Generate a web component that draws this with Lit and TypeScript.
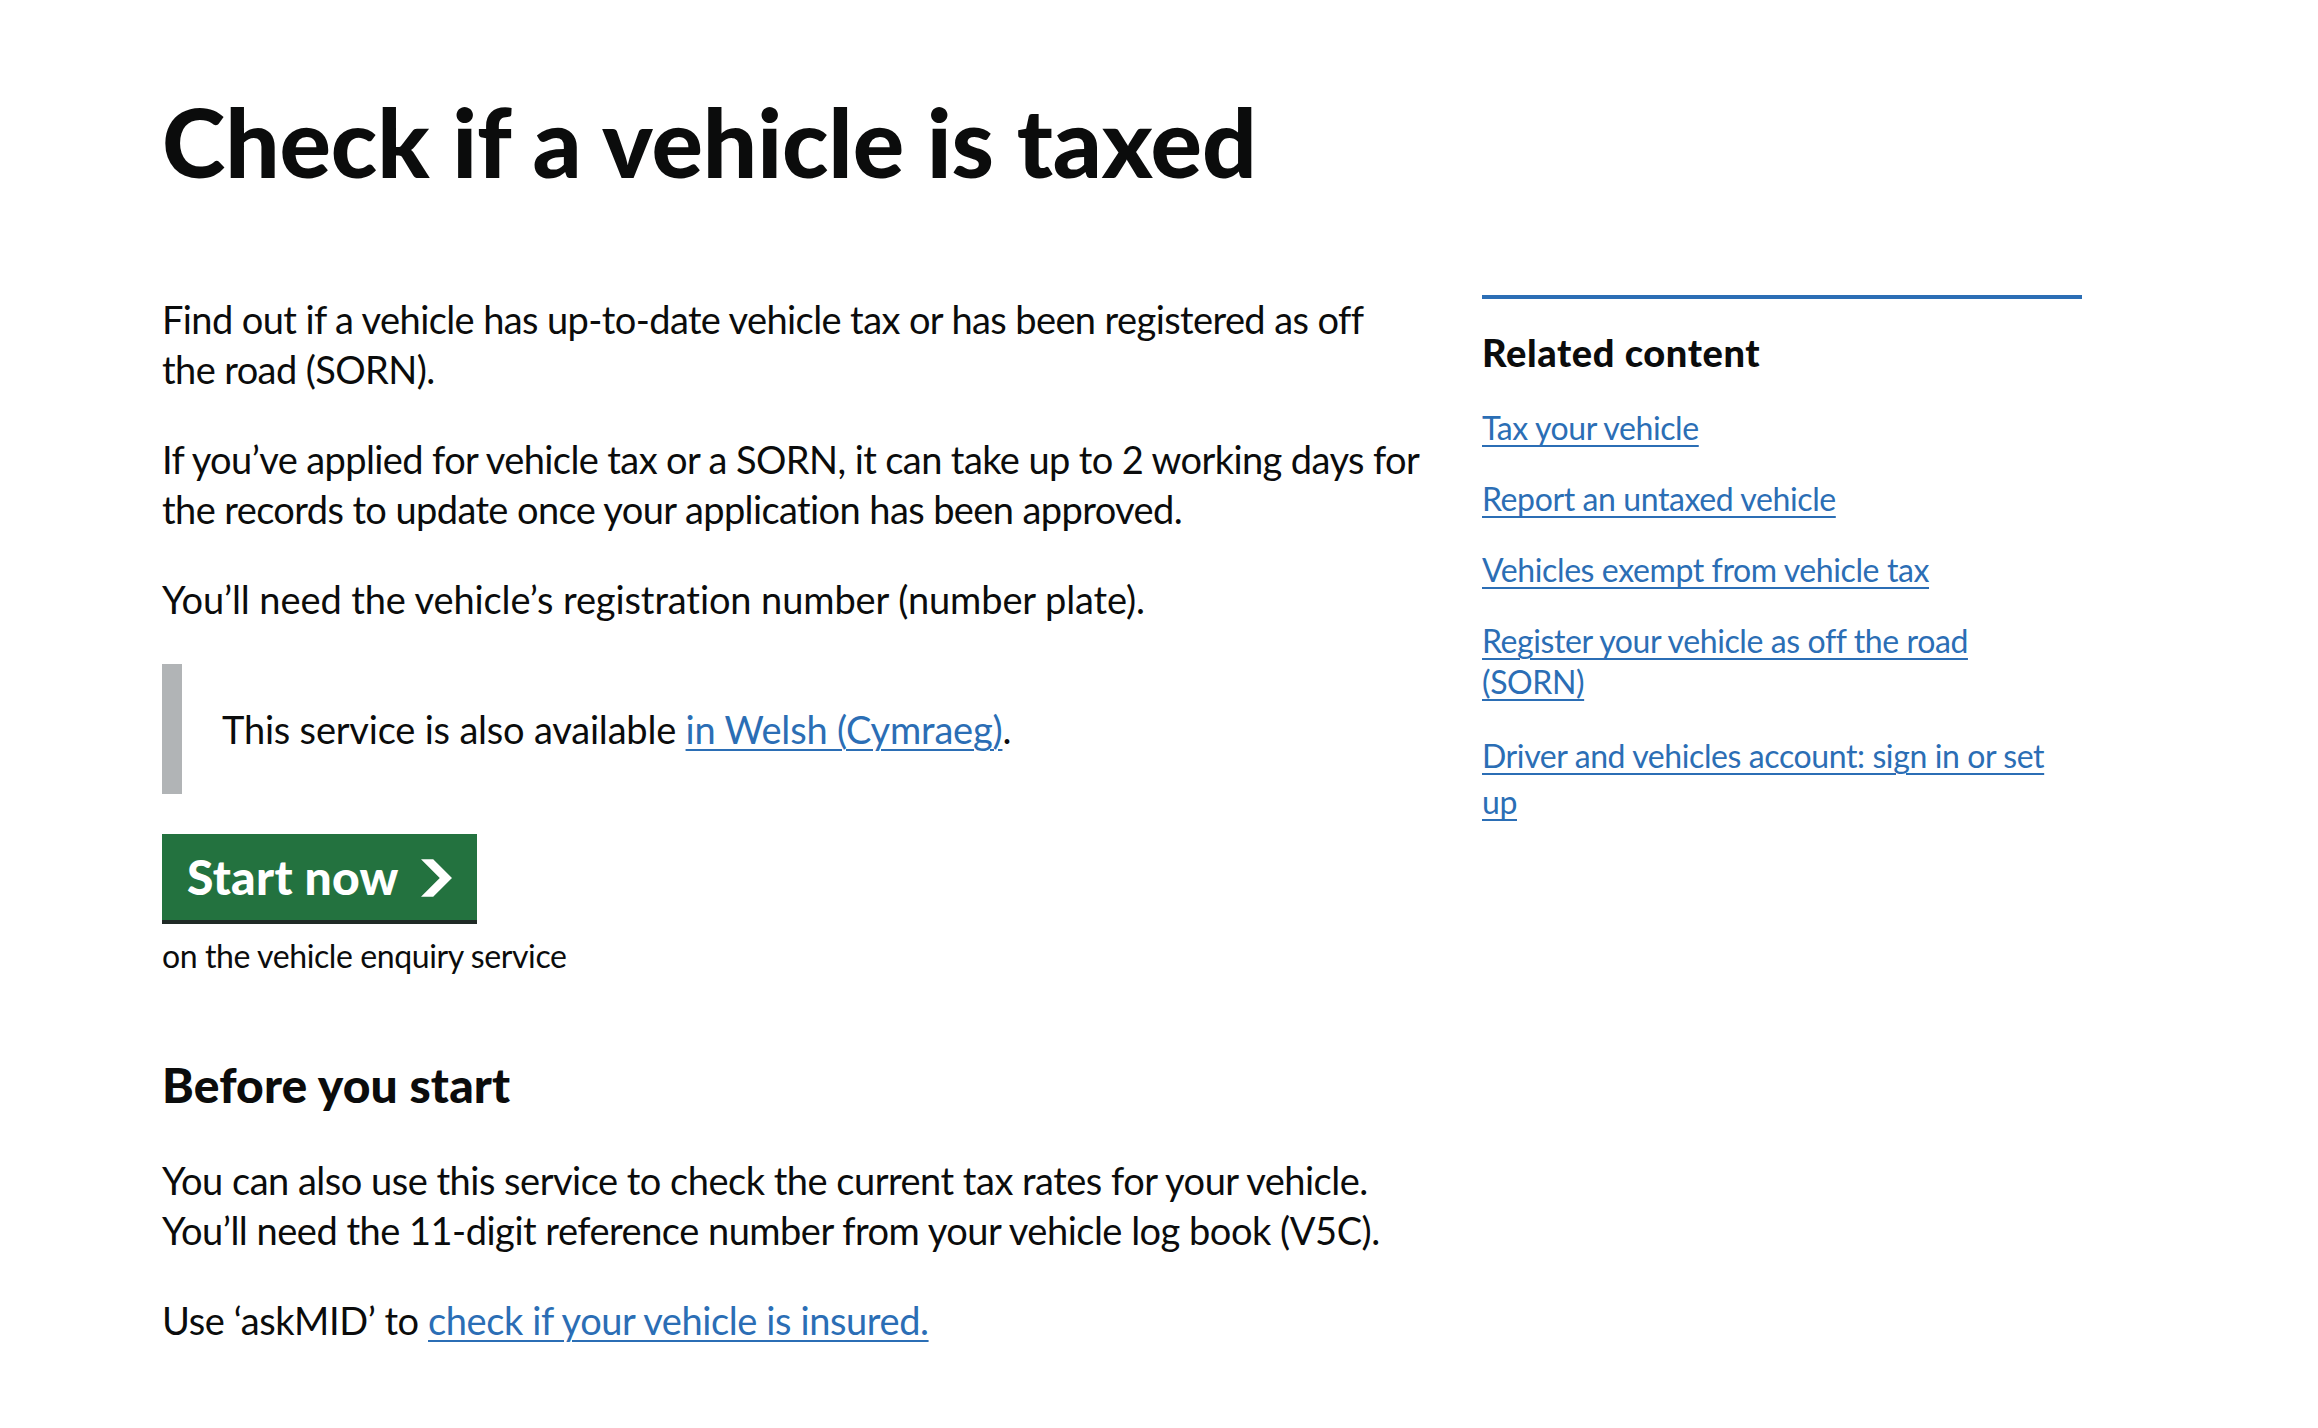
import { LitElement, html, css } from "lit";
import { customElement } from "lit/decorators.js";

@customElement("app-root")
export class AppRoot extends LitElement {
  static styles = css`
    :host { display: block; background: #fff; color: #0b0c0c; font-family: Lato, "Noto Sans", sans-serif; min-height: 1428px; }
    .page { padding: 91px 0 0 162px; display: grid; grid-template-columns: 1288px 600px; column-gap: 32px; }
    h1 { grid-column: 1 / -1; margin: 0 0 103px; font-size: 96px; line-height: 100px; font-weight: 900; letter-spacing: -0.1px; }
    p { margin: 0 0 40px; font-size: 38px; line-height: 50px; letter-spacing: -0.6px; }
    p.wide { letter-spacing: -0.1px; }
    p.mid { letter-spacing: -0.5px; }
    p.last { letter-spacing: -0.4px; }
    a { color: #2b6eb5; text-decoration: underline; text-decoration-thickness: 2px; text-underline-offset: 5px; }
    .callout { border-left: 20px solid #b1b4b6; padding: 40px; margin-bottom: 40px; font-size: 38px; line-height: 50px; letter-spacing: -0.2px; }
    .start { display: inline-flex; align-items: center; gap: 22px; box-sizing: border-box; width: 315px; height: 90px; padding: 0 0 2px 25px; background: #23723f; border-bottom: 4px solid #1f2a26; color: #fff; font-size: 48px; font-weight: 900; letter-spacing: 0.3px; }
    .start svg { width: 31px; height: 38px; fill: #fff; display: block; margin-top: 3px; }
    .sub { margin: 12px 0 0; font-size: 32px; line-height: 40px; letter-spacing: -0.4px; }
    h2 { margin: 79px 0 40px; font-size: 48px; line-height: 60px; font-weight: 900; letter-spacing: 0.15px; }
    aside { border-top: 4px solid #2b6eb5; margin-top: 1px; padding-top: 30px; align-self: start; }
    h3 { margin: 0 0 32px; font-size: 38px; line-height: 46px; font-weight: 900; letter-spacing: 0.6px; }
    ul { list-style: none; margin: 0; padding: 0 20px 0 0; font-size: 32px; line-height: 41px; letter-spacing: -0.4px; }
    li { margin-bottom: 30px; }
    li.tall { line-height: 46px; margin-top: 31px; }
  `;
  render() {
    return html`<div class="page">
      <h1>Check if a vehicle is taxed</h1>
      <main>
        <p>Find out if a vehicle has up-to-date vehicle tax or has been registered as off<br>the road (SORN).</p>
        <p>If you’ve applied for vehicle tax or a SORN, it can take up to 2 working days for the records to update once your application has been approved.</p>
        <p class="wide">You’ll need the vehicle’s registration number (number plate).</p>
        <div class="callout">This service is also available <a href="#">in Welsh (Cymraeg)</a>.</div>
        <div class="start">Start now <svg viewBox="0 0 33 40" aria-hidden="true"><path d="M0 0h13l20 20-20 20H0l20-20z"/></svg></div>
        <div class="sub">on the vehicle enquiry service</div>
        <h2>Before you start</h2>
        <p class="mid">You can also use this service to check the current tax rates for your vehicle.<br>You’ll need the 11-digit reference number from your vehicle log book (V5C).</p>
        <p class="last">Use ‘askMID’ to <a href="#">check if your vehicle is insured.</a></p>
      </main>
      <aside>
        <h3>Related content</h3>
        <ul>
          <li><a href="#">Tax your vehicle</a></li>
          <li><a href="#">Report an untaxed vehicle</a></li>
          <li><a href="#">Vehicles exempt from vehicle tax</a></li>
          <li><a href="#">Register your vehicle as off the road (SORN)</a></li>
          <li class="tall"><a href="#">Driver and vehicles account: sign in or set up</a></li>
        </ul>
      </aside>
    </div>`;
  }
}
